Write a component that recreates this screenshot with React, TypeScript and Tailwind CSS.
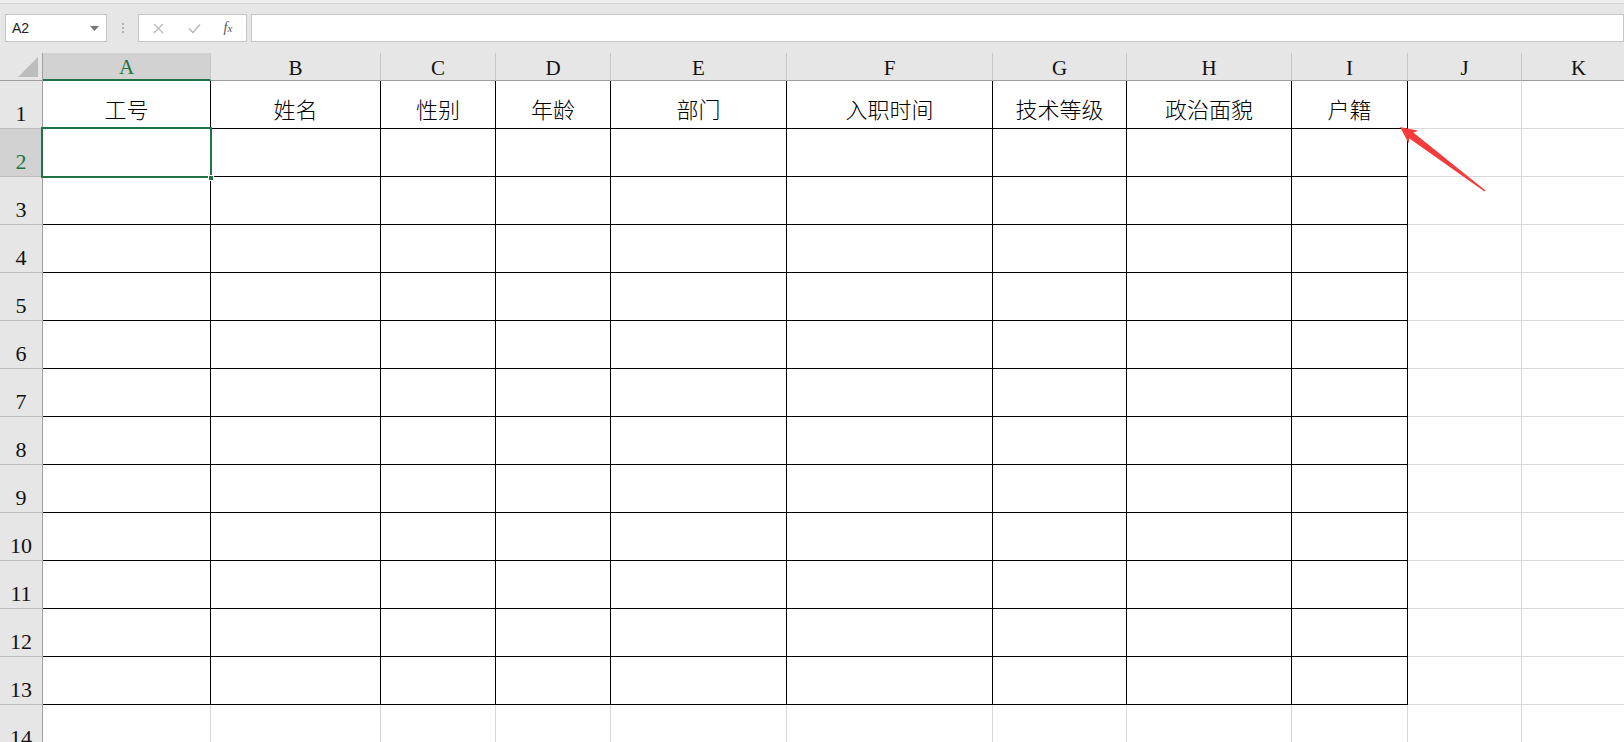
import React from "react";

const COLS = ["A", "B", "C", "D", "E", "F", "G", "H", "I", "J", "K"];
const HEADERS = ["工号", "姓名", "性别", "年龄", "部门", "入职时间", "技术等级", "政治面貌", "户籍"];
const ROWS = Array.from({ length: 14 }, (_, i) => i + 1);

function Corner() {
  return (
    <div className="relative bg-[#e6e6e6] border-r border-b border-[#9e9e9e]">
      <svg className="absolute left-0 top-0" width="42" height="28" viewBox="0 0 42 28">
        <polygon points="18,24 38,4 38,24" fill="#bdbdbd" />
      </svg>
    </div>
  );
}

function ColHeader({ label, active }: { label: string; active: boolean }) {
  return active ? (
    <div className="flex items-center justify-center pt-[2px] bg-[#d2d2d2] border-r border-[#c8c8c8] border-b-2 border-b-[#217346] text-[#217346] text-[21px] leading-none font-['Liberation_Serif',serif]">
      {label}
    </div>
  ) : (
    <div className="flex items-center justify-center pt-[3px] bg-[#e6e6e6] border-r border-[#c8c8c8] border-b border-b-[#9e9e9e] text-[#111] text-[21px] leading-none font-['Liberation_Serif',serif]">
      {label}
    </div>
  );
}

function RowHeader({ n }: { n: number }) {
  return n === 2 ? (
    <div className="flex items-end justify-center pb-[3px] bg-[#d2d2d2] border-r border-[#9e9e9e] border-b border-b-[#bdbdbd] text-[#217346] text-[22px] leading-none font-['Liberation_Serif',serif]">
      {n}
    </div>
  ) : (
    <div className="flex items-end justify-center pb-[3px] bg-[#e6e6e6] border-r border-[#9e9e9e] border-b border-b-[#bdbdbd] text-[#111] text-[22px] leading-none font-['Liberation_Serif',serif]">
      {n}
    </div>
  );
}

function Cell({ r, c }: { r: number; c: number }) {
  const inTable = r <= 13 && c <= 8;
  if (r === 1 && c <= 8) {
    return (
      <div className="flex items-center justify-center pt-[6px] border-r border-b border-black text-[22px] leading-none font-light text-black font-['Noto_Sans_CJK_SC','Noto_Sans_CJK_JP',sans-serif]">
        {HEADERS[c]}
      </div>
    );
  }
  if (inTable) {
    return <div className="border-r border-b border-black" />;
  }
  return <div className="border-r border-b border-[#d9d9d9]" />;
}

export default function App() {
  return (
    <div className="relative w-[1624px] h-[742px] overflow-hidden bg-white font-['Liberation_Sans',sans-serif]">
      {/* top strip */}
      <div className="h-[4px] bg-[#eeeeee] border-b border-[#d4d4d4]" />
      {/* formula bar */}
      <div className="h-[49px] bg-[#e6e6e6] flex items-start pt-[10px] pl-[5px] gap-0">
        <div className="w-[102px] h-[28px] bg-white border border-[#c6c6c6] flex items-center justify-between pl-[6px] pr-[7px]">
          <span className="text-[14px] text-[#222] font-['Liberation_Sans',sans-serif]">A2</span>
          <svg width="9" height="5" viewBox="0 0 9 5">
            <polygon points="0,0 9,0 4.5,5" fill="#777" />
          </svg>
        </div>
        <div className="w-[31px] h-[28px] flex flex-col items-center justify-center gap-[2px]">
          <span className="w-[2px] h-[2px] bg-[#b4b4b4]" />
          <span className="w-[2px] h-[2px] bg-[#b4b4b4]" />
          <span className="w-[2px] h-[2px] bg-[#b4b4b4]" />
        </div>
        <div className="w-[109px] h-[28px] bg-white border border-[#c6c6c6] flex items-center">
          <div className="w-[38px] flex justify-center">
            <svg width="11" height="11" viewBox="0 0 11 11">
              <path d="M1 1 L10 10 M10 1 L1 10" stroke="#bcbcbc" strokeWidth="1.4" />
            </svg>
          </div>
          <div className="w-[34px] flex justify-center">
            <svg width="13" height="11" viewBox="0 0 13 11">
              <path d="M1 5.5 L5 9.5 L12 1.5" stroke="#bcbcbc" strokeWidth="1.6" fill="none" />
            </svg>
          </div>
          <div className="w-[34px] flex justify-center">
            <span className="italic text-[14px] text-[#555] font-['Liberation_Serif',serif] leading-none">
              f<span className="text-[11px]">x</span>
            </span>
          </div>
        </div>
        <div className="ml-[4px] flex-1 h-[28px] bg-white border border-[#c6c6c6]" />
      </div>
      {/* sheet */}
      <div className="grid grid-cols-[43px_168px_170px_115px_115px_176px_206px_134px_165px_116px_114px_114px] grid-rows-[28px_repeat(14,48px)] w-[1636px]">
        <Corner />
        {COLS.map((l, i) => (
          <ColHeader key={l} label={l} active={i === 0} />
        ))}
        {ROWS.map((r) => (
          <React.Fragment key={r}>
            <RowHeader n={r} />
            {COLS.map((_, c) => (
              <Cell key={c} r={r} c={c} />
            ))}
          </React.Fragment>
        ))}
      </div>
      {/* selection */}
      <div className="absolute left-[41px] top-[127px] w-[171px] h-[51px] border-2 border-[#217346]" />
      <div className="absolute left-[208px] top-[175px] w-[6px] h-[6px] bg-[#217346] border border-white" />
      {/* arrow */}
      <svg className="absolute left-0 top-0 pointer-events-none" width="1624" height="742" viewBox="0 0 1624 742">
        <polygon
          points="1400,127 1418.4,130.8 1413.3,132.6 1485.5,190.4 1484.5,191.6 1409.1,138.2 1408.8,143.6"
          fill="#f33b3b"
        />
      </svg>
    </div>
  );
}
